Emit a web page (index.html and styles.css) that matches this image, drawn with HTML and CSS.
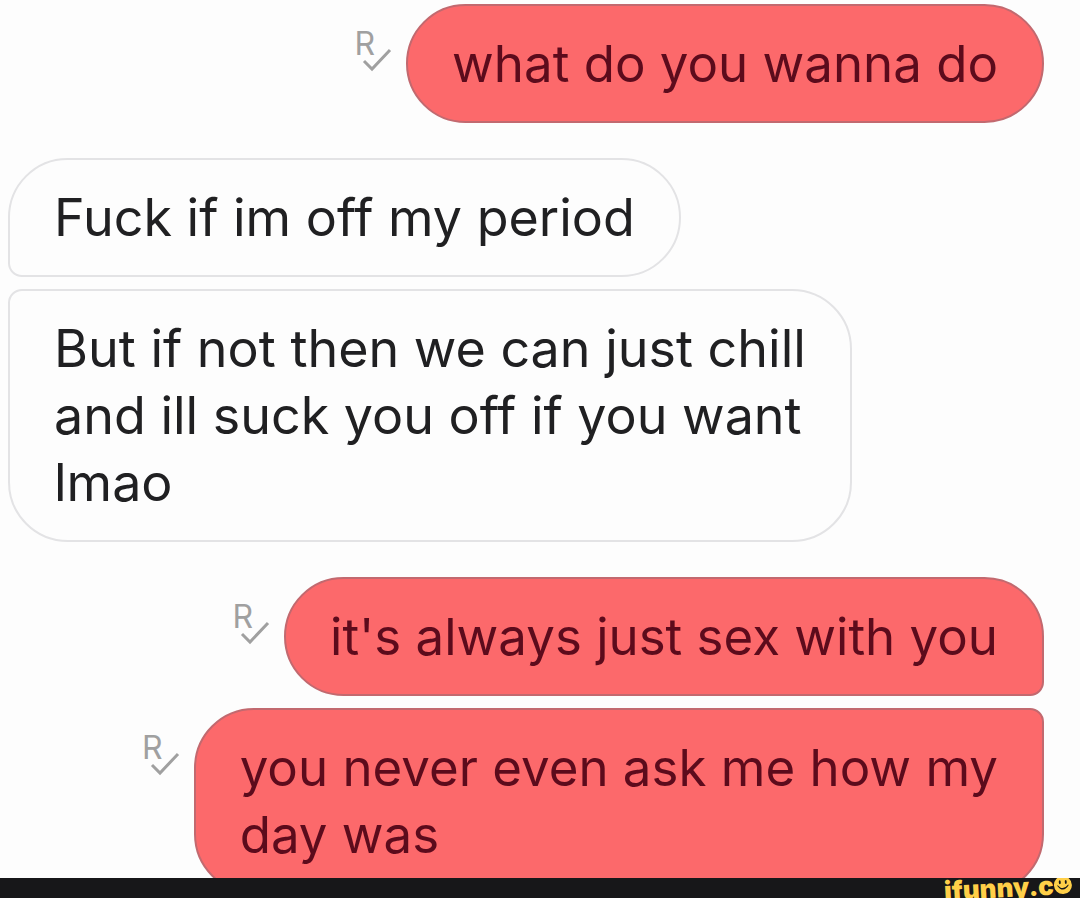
FILE: index.html
```html
<!DOCTYPE html>
<html lang="en">
<head>
<meta charset="utf-8">
<meta name="viewport" content="width=device-width, initial-scale=1">
<title>Messages</title>
<link rel="stylesheet" href="styles.css">
</head>
<body>
<main class="chat">
  <section class="group sent">
    <div class="row">
      <span class="receipt">R<svg class="tick" viewBox="0 0 30 24" aria-hidden="true"><path d="M2 13L10 21L28 2"/></svg></span>
      <p class="bubble">what do you wanna do</p>
    </div>
  </section>
  <section class="group received">
    <div class="row"><p class="bubble">Fuck if im off my period</p></div>
    <div class="row"><p class="bubble">But if not then we can just chill<br>and ill suck you off if you want<br>lmao</p></div>
  </section>
  <section class="group sent">
    <div class="row">
      <span class="receipt">R<svg class="tick" viewBox="0 0 30 24" aria-hidden="true"><path d="M2 13L10 21L28 2"/></svg></span>
      <p class="bubble">it's always just sex with you</p>
    </div>
    <div class="row">
      <span class="receipt">R<svg class="tick" viewBox="0 0 30 24" aria-hidden="true"><path d="M2 13L10 21L28 2"/></svg></span>
      <p class="bubble">you never even ask me how my<br>day was</p>
    </div>
  </section>
</main>
<footer class="footer">
  <span class="brand">ifunny.c<svg class="smile" viewBox="0 0 18 18" aria-hidden="true"><circle class="face" cx="9" cy="9" r="9"/><ellipse cx="6" cy="6" rx="1" ry="2"/><ellipse cx="12" cy="6" rx="1" ry="2"/><path d="M3 9Q9 18 15 9L14 9Q9 15 4 9Z"/></svg></span>
</footer>
</body>
</html>
```
FILE: styles.css
```css
* {
  box-sizing: border-box;
}

body {
  margin: 0;
  height: 100vh;
  display: flex;
  flex-direction: column;
  background: #fdfdfd;
  font-family: Inter, "Liberation Sans", sans-serif;
}

.chat {
  flex: 1;
  min-height: 0;
  overflow: hidden;
  display: flex;
  flex-direction: column;
  gap: 35px;
  padding: 4px 36px 0 8px;
}

.group {
  display: flex;
  flex-direction: column;
  flex-shrink: 0;
  gap: 12px;
}

.row {
  display: flex;
  align-items: flex-start;
}

.bubble {
  margin: 0;
  padding: 24px 44px;
  border: 2px solid #e3e3e5;
  border-radius: 60px;
  font-size: 52px;
  line-height: 67px;
  white-space: nowrap;
  color: #202022;
}

.sent .row {
  justify-content: flex-end;
  gap: 14px;
}

.sent .bubble {
  background: #fc696b;
  border-color: #c2696f;
  font-size: 51px;
  color: #5c0b1c;
}

.row:first-child:not(:last-child) .bubble {
  border-bottom-left-radius: 14px;
}

.row:last-child:not(:first-child) .bubble {
  border-top-left-radius: 14px;
}

.sent .row:first-child:not(:last-child) .bubble {
  border-radius: 60px 60px 14px 60px;
}

.sent .row:last-child:not(:first-child) .bubble {
  border-radius: 60px 14px 60px 60px;
}

.receipt {
  display: flex;
  margin-top: 24px;
  font-size: 32px;
  line-height: 32px;
  color: #a0a0a0;
}

.tick {
  width: 30px;
  height: 24px;
  margin: 20px 0 0 -13px;
  fill: none;
  stroke: #a0a0a0;
  stroke-width: 3;
}

.footer {
  flex: none;
  height: 20px;
  padding-right: 8px;
  overflow: hidden;
  display: flex;
  justify-content: flex-end;
  background: #171719;
}

.brand {
  display: flex;
  align-items: center;
  height: 20px;
  font-size: 26px;
  font-weight: 900;
  line-height: 20px;
  color: #ffcf48;
  transform: rotate(-3deg);
}

.smile {
  width: 18px;
  height: 18px;
  fill: #171719;
}

.face {
  fill: #ffcf48;
}
```
